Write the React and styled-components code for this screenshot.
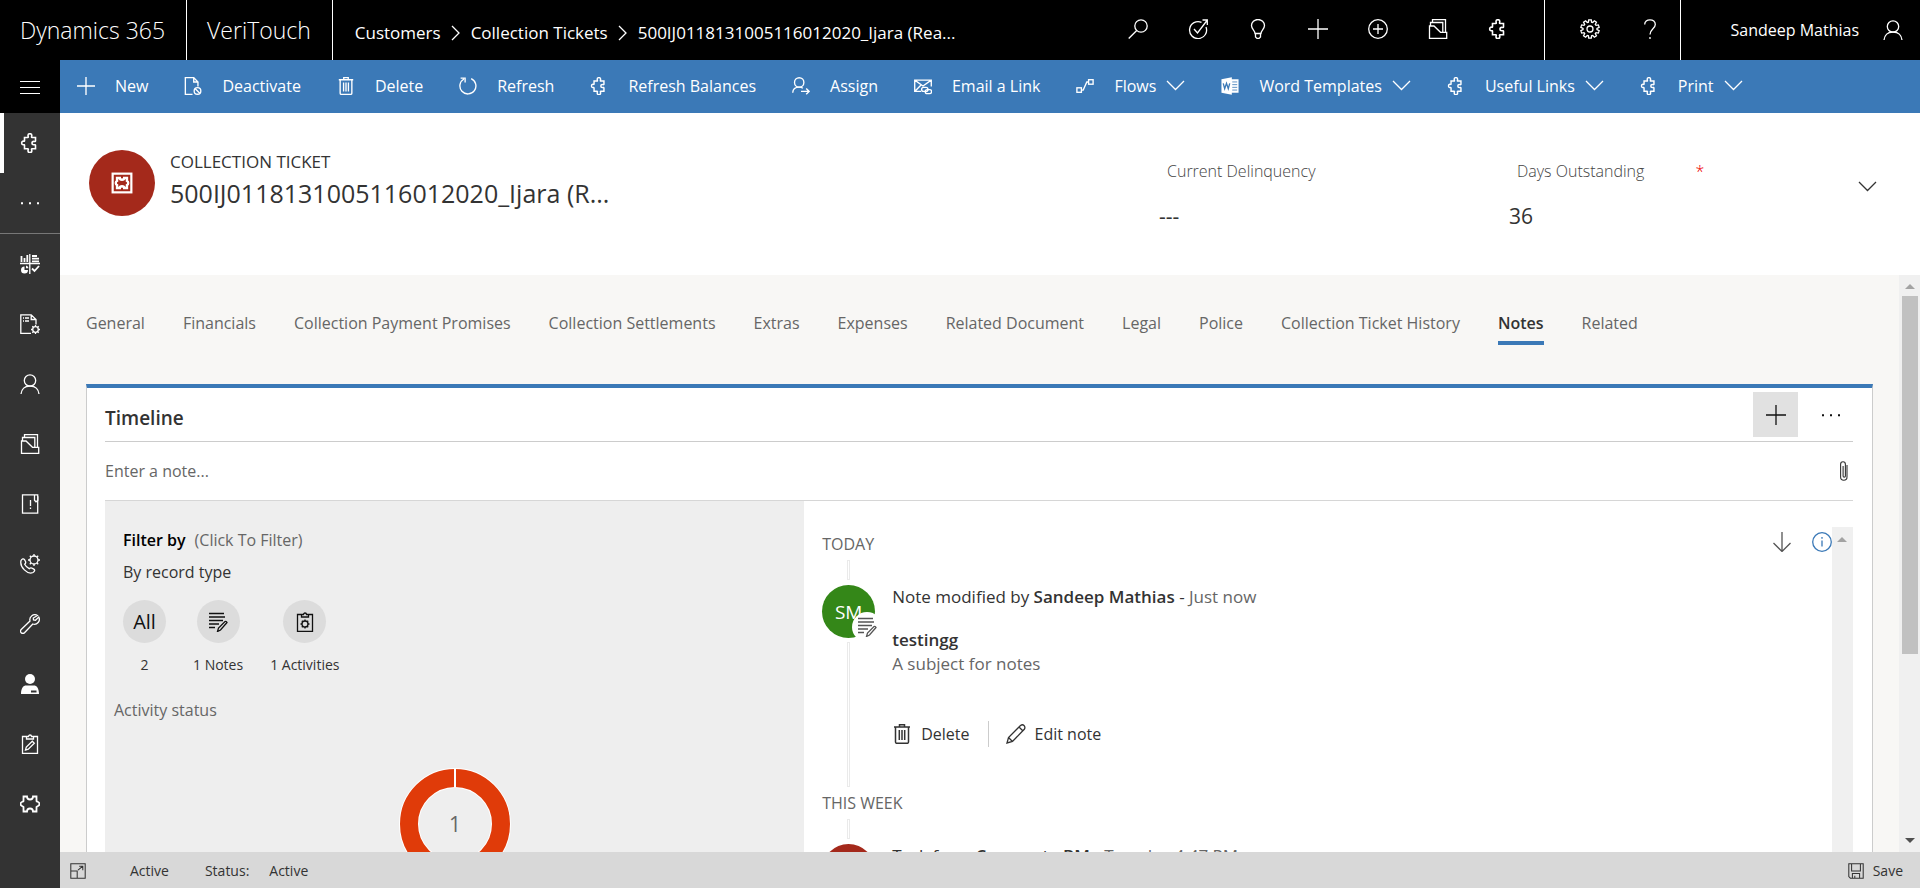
import React from 'react';
import styled, { createGlobalStyle } from 'styled-components';

const Global = createGlobalStyle`
  *, *::before, *::after { box-sizing: border-box; }
  body { margin: 0; font-family: "Open Sans", sans-serif; font-size: 16px; line-height: 24px; color: #333; background: #f8f7f5; }
  button, input { font: inherit; color: inherit; background: none; border: 0; padding: 0; }
  a { color: inherit; text-decoration: none; }
  ul { list-style: none; margin: 0; padding: 0; }
  h1, h2, h3, p { margin: 0; font-size: inherit; font-weight: inherit; }
`;

const Svg = styled.svg`
  display: block;
  flex: none;
  width: ${p => p.$w || 20}px;
  height: ${p => p.$h || 20}px;
  fill: none;
  stroke: currentColor;
  stroke-width: ${p => p.$s || 1.3};
`;
const PUZZLE = 'M6 4.500h1.800c1 0 .2-1 .2-1.900a1.900 1.900 0 0 1 3.800 0c0 .9-.8 1.900.2 1.900h3.500v3.500c0 .9-1 .4-1.800.4a1.700 1.700 0 0 0 0 3.400c.8 0 1.800-.5 1.800.5v3.500h-3.500c-1 0-.2 1-.2 1.900a1.900 1.900 0 0 1-3.800 0c0-.9.8-1.900-.2-1.900H4.500v-3.500c0-1-.5-.5-1.400-.5a1.900 1.900 0 0 1 0-3.700c.9 0 1.400.5 1.400-.4V4.500z';
const GEAR = (() => {
  const pts = [];
  for (let i = 0; i < 10; i++) {
    [[-13, 7], [-8, 9.300], [8, 9.300], [13, 7]].forEach(([d, r]) => {
      const a = ((i * 36 + d) * Math.PI) / 180;
      pts.push(`${(10 + r * Math.sin(a)).toFixed(2)} ${(10 - r * Math.cos(a)).toFixed(2)}`);
    });
  }
  return `M${pts.join('L')}z`;
})();
const GLYPHS = {
  menu: <path d="M0 4.500h20M0 10.500h20M0 16.500h20" strokeWidth="1" />,
  plus: <path d="M10 0v20M0 10h20" />,
  search: <><circle cx="13" cy="7" r="6.200" /><path d="M8.700 11.500L.7 19.500" /></>,
  target: <><path d="M18 8a8.500 8.500 0 1 1-4.500-4.700M6 10l3.500 4L19 1.500M14.500 1h4.800v5" /></>,
  bulb: <><path d="M7 14.500c0-3-3.500-4.500-3.500-8a6.500 6 0 0 1 13 0c0 3.500-3.500 5-3.500 8zM7.500 14.500v3.500l1.500 1.400h2l1.500-1.400v-3.500" /></>,
  circlePlus: <><circle cx="10" cy="10" r="9.300" /><path d="M10 5v10M5 10h10" /></>,
  folder: <path d="M4.500 3.500V.7h13v12.300M2.500 7V3.500h12.300v9.500M1.500 7h4.500l6.500 6.300h6.200v6H1.500z" />,
  puzzle: <path d={PUZZLE} strokeWidth="1.6" />,
  gear: <><path d={GEAR} /><circle cx="10" cy="10" r="3" /></>,
  help: <><path d="M4.700 5.500C4.700 2.500 7 .8 10 .8s5.300 1.700 5.300 4.700c0 4.200-5.300 4.500-5.300 10" /><path d="M10 18v2" /></>,
  person: <><circle cx="10" cy="6.500" r="5.700" /><path d="M1 20c.4-4.800 3.800-8 9-8s8.600 3.200 9 8" /></>,
  deactivate: <><path d="M9.500 19.300H1.500V.7h9.300l4.700 4.800v5M10.800.7v4.800h4.700" /><circle cx="15" cy="15.500" r="3.700" /><path d="M12.500 13l5 5" /></>,
  trash: <><path d="M2 3h16M7.500 3V.7h5V3M3.500 3v15q0 1.300 1.300 1.300h10.400q1.300 0 1.300-1.300V3" strokeWidth="1.500" /><path d="M7.300 6v10M10 6v10M12.700 6v10" strokeWidth="1.500" /></>,
  refresh: <path d="M13.500 1.800a8.900 8.900 0 1 1-8 .4M1.800 1.200h5v5" />,
  assign: <><circle cx="8" cy="6" r="5.200" /><path d="M.8 17.500C1 13.500 4 11.200 8 11.200c1.800 0 3 .4 4 1.300M10 16h9M15.800 12.800L19 16l-3.200 3.200" /></>,
  email: <><path d="M8 16H.8V3.500h18.400v7M.8 3.500l9.200 6.500 9.200-6.500M.8 16l7-7" /><rect x="8.500" y="11.500" width="7" height="4.500" rx="2.200" /><rect x="12.500" y="14" width="7" height="4.500" rx="2.200" /></>,
  flow: <><rect x="1" y="12" width="5" height="5" /><rect x="14" y="3" width="5" height="5" /><path d="M6 14.500h2L12 5.500h2" /></>,
  word: <><path d="M11 2.500h8.500v15H11z" fill="currentColor" stroke="none" /><path d="M12.500 5.500h5.500M12.500 8.500h5.500M12.500 11.500h5.500M12.500 14.500h5.500" stroke="#3b79b7" strokeWidth=".9" /><path d="M.5 2.500L12 .3v19.400L.5 17.500z" fill="currentColor" stroke="none" /><path d="M2.500 7l1.600 6 2-6 2 6 1.600-6" stroke="#3b79b7" /></>,
  dots: <path d="M1 9.200h2v2H1zM9 9.200h2v2H9zM17 9.200h2v2h-2z" fill="currentColor" stroke="none" />,
  dashboard: <><path d="M9.800 0v20M0 9.500h20" /><path d="M1.500 8V2M4.500 8V4M7.300 8V1M12 2h5M12 4.700h7M12 7.300h7M12 14.500l2.500 2.500 4.500-5" strokeWidth="1.8" /><path d="M4.500 12.500v3.500h3.500a3.500 3.500 0 1 1-3.500-3.500zM6 11.500a3 3 0 0 1 2.500 2.800H6z" fill="currentColor" stroke="none" /></>,
  docGear: <><path d="M11 19.300H.8V.8h10.400l4.800 4.700v5M11.200.8v4.700H16M3 4h1M5 4h4M3 7h1M5 7h4" /><circle cx="15.500" cy="15.500" r="2.800" /><path d="M15.500 11v1.500M15.500 18.500V20M11 15.500h1.500M18.500 15.500H20M12.300 12.300l1 1M17.700 17.700l1 1M12.300 18.700l1-1M17.700 13.300l1-1" /></>,
  report: <><path d="M2.500.8h15.200v18.400H2.500zM14.500.8v5.500l1.500 1.500 2-1.500v-4" /><path d="M10.500 6v6M10.500 13.500V15" /></>,
  phone: <><path d="M1 6.500c1-1.700 2.500-2.300 3.500-.8l1 1.800c.6 1.200 0 2-.8 2.700 1.300 2.500 2.500 3.500 4.500 4.500 1-1 1.800-1.200 2.800-.6l1.800 1c1.500 1 .8 2.400-.8 3.400C7.500 21 -.5 13 1 6.500z" /><circle cx="14" cy="6" r="4" /><path d="M14 0v2M14 10v2M8 6h2M18 6h2M9.800 1.800l1.400 1.400M16.800 8.800l1.400 1.400M9.800 10.200l1.400-1.400M16.800 3.200l1.400-1.400" /></>,
  wrench: <path d="M17.500 1.500A5 5 0 0 0 10 7L1.200 15.500a2 2 0 0 0 3.300 3.300L12.800 10a5 5 0 0 0 6-7L15.500 6.200l-2-.2-.2-2z" />,
  personSolid: <><circle cx="10" cy="5" r="5" fill="currentColor" stroke="none" /><path d="M1 20c0-6 2.500-8.500 5-8.500h8c2.500 0 5 2.500 5 8.500zM11 16.500v2h5.500v-2z" fill="currentColor" fillRule="evenodd" stroke="none" /></>,
  clipPencil: <><path d="M6.500 2.500h-4v16.800h15V2.500h-4M6.500 5V2.500h2a1.500 1.500 0 0 1 3 0h2V5z" /><path d="M5.500 16l.8-3 6-5.800 2 2-6 6z" /></>,
  clipGear: <><path d="M6.500 2.500h-4v16.800h15V2.500h-4M6.500 5V2.500h2a1.500 1.500 0 0 1 3 0h2V5z" /><circle cx="10" cy="12" r="3" /><path d="M10 7.500V9M10 15v1.500M5.500 12H7M13 12h1.500M6.800 8.800l1 1M12.200 14.200l1 1M6.800 15.200l1-1M12.200 9.800l1-1" /></>,
  puzzleWide: <path d="M3.500 2.500H7c0 2 .8 3 3 3s3-1 3-3h3.500V7c.5 1 3 .7 3 3s-2.500 2-3 3v4.500H13c0-2-.8-3-3-3s-3 1-3 3H3.500V13c-.5-1-3-.7-3-3s2.500-2 3-3z" strokeWidth="1.8" />,
  ticket: <><rect x="1.500" y="1.500" width="17" height="17" strokeWidth="2" /><path d="M5.500 5.500H8c0 2 4 2 4 0h2.500V8c1.500.5 1.500 3.500 0 4v2.500H12c0-2-4-2-4 0H5.500V12C4 11.500 4 8.500 5.500 8z" strokeWidth="2.200" /></>,
  notePencil: <><path d="M1 1.500h15M1 5h16M1 8.500h14M1 12h10M1 15.500h6" /><path d="M9.500 19.500l1-3.500 6.500-6.500q1.500-.5 2 1L12.500 18z" /></>,
  pencil: <><path d="M1 19l1.500-5.500L14.500 1.500q2-1.500 3.500 0t.5 3.500L6.500 17.500zM2.500 13.500l4 4M13 3l4 4" /></>,
  clip: <path d="M.6 4v12a3 3 0 0 0 6.400 0V4M.6 4v-.8a2.300 2.300 0 0 1 4.800 0V15a1 1 0 0 1-2.300 0V5" />,
  arrowDown: <path d="M10 0v19M1.500 11L10 19.500l8.500-8.500" />,
  info: <><circle cx="10" cy="10" r="9.300" /><path d="M10 8.500v6M10 5v1.800" /></>,
  popout: <><path d="M1 1h18v18H1zM1 10h8v9" /><path d="M10 9l6-5M11.500 4H16v5" /></>,
  save: <><path d="M1 1h18v18H3l-2-2zM4.500 1v9h11V1M5.500 19v-6h9v6M8.500 19v-3" /></>,
};
const Icon = ({ name, size = 20, stroke }) => (
  <Svg viewBox="0 0 20 20" $w={size} $h={size} $s={stroke} aria-hidden="true">{GLYPHS[name]}</Svg>
);
const Chevron = ({ right }) => (
  <Svg viewBox={right ? '0 0 10 18' : '0 0 19 11'} $w={right ? 10 : 19} $h={right ? 18 : 11} aria-hidden="true">
    <path d={right ? 'M1 2l7 7-7 7' : 'M1 1l8.500 8.500L18 1'} />
  </Svg>
);

const Page = styled.div`
  height: 100vh;
  display: grid;
  grid-template: 60px minmax(0, 1fr) / 60px minmax(0, 1fr);
`;
const TopBar = styled.header`
  grid-column: 1 / -1;
  display: flex;
  background: #000;
  color: #fff;
`;
const Brand = styled.a`
  display: flex;
  align-items: center;
  padding: 0 21px 0 20px;
  border-right: 1px solid #fff;
  font-size: 23px;
  font-weight: 300;
  white-space: nowrap;
`;
const Crumbs = styled.nav`
  flex: 1;
  display: flex;
  align-items: center;
  gap: 10px;
  padding: 6px 0 0 22px;
  font-size: 17px;
  white-space: nowrap;
`;
const TopGroup = styled.div`
  display: flex;
  padding: 0 ${p => p.$end || 0}px 0 ${p => p.$start || 0}px;
  border-right: 1px solid #fff;
`;
const TopButton = styled.button`
  width: 60px;
  padding-bottom: 2px;
  display: flex;
  align-items: center;
  justify-content: center;
`;
const User = styled.button`
  display: flex;
  align-items: center;
  gap: 24px;
  padding: 0 17px 0 49px;
`;
const Rail = styled.nav`
  background: #333;
  color: #fff;
  overflow: hidden;
`;
const RailButton = styled.button`
  width: 100%;
  height: ${p => (p.$menu ? 53 : p.$divided ? 61 : 60)}px;
  display: flex;
  align-items: center;
  justify-content: center;
  background: ${p => (p.$menu ? '#000' : 'transparent')};
  box-shadow: ${p => (p.$active ? 'inset 4px 0 #fff' : 'none')};
  border-bottom: ${p => (p.$divided ? '1px solid #777' : '0')};
`;
const Main = styled.main`
  display: flex;
  flex-direction: column;
  min-height: 0;
`;
const Commands = styled.div`
  flex: none;
  display: flex;
  gap: 35px;
  height: 53px;
  padding: 0 0 2px 16px;
  background: #3b79b7;
  color: #fff;
`;
const Command = styled.button`
  display: flex;
  align-items: center;
  gap: 19px;
  white-space: nowrap;
`;
const CommandIcon = styled.span`
  display: grid;
  place-items: center;
  width: 20px;
`;
const CommandLabel = styled.span`
  display: flex;
  align-items: center;
  gap: 10px;
`;
const RecordHeader = styled.section`
  flex: none;
  display: flex;
  height: 162px;
  padding: 37px 43px 0 29px;
  background: #fff;
`;
const Badge = styled.div`
  flex: none;
  width: 66px;
  height: 66px;
  display: grid;
  place-items: center;
  border-radius: 50%;
  background: #a4291b;
  color: #fff;
`;
const RecordName = styled.div`
  flex: 1;
  padding-left: 15px;
  p { font-size: 17px; }
  h1 { font-size: 25px; line-height: 38px; }
`;
const Field = styled.div`
  width: ${p => p.$w}px;
  padding-top: 9px;
`;
const FieldLabel = styled.div`
  display: flex;
  gap: 51px;
  padding-left: 8px;
  font-weight: 300;
  color: #444;
  span { color: #e00; }
`;
const FieldValue = styled.div`
  padding-top: 21px;
  font-size: 21px;
`;
const Expand = styled.button`
  align-self: flex-start;
  padding-top: 31px;
`;
const FormArea = styled.section`
  flex: 1;
  min-height: 0;
  display: flex;
  overflow: hidden;
`;
const Form = styled.div`
  flex: 1;
  min-width: 0;
  padding: 36px 26px 0;
`;
const Tabs = styled.nav`
  display: flex;
  gap: 38px;
  white-space: nowrap;
  color: #666;
`;
const Tab = styled.a`
  height: 34px;
  border-bottom: 4px solid ${p => (p.$active ? '#3b79b7' : 'transparent')};
  ${p => p.$active && 'font-weight: 600; color: #333;'}
`;
const Card = styled.section`
  margin-top: 39px;
  padding: 0 19px 0 18px;
  background: #fff;
  border: 1px solid #ccc;
  border-top: 4px solid #3b79b7;
`;
const CardHead = styled.div`
  display: flex;
  align-items: center;
  height: 54px;
  border-bottom: 1px solid #ccc;
  h2 { flex: 1; padding-top: 6px; font-size: 19px; font-weight: 600; }
`;
const CardButton = styled.button`
  width: 45px;
  height: 45px;
  display: grid;
  place-items: center;
  background: ${p => (p.$filled ? '#e1e1e1' : 'transparent')};
  margin-right: ${p => (p.$filled ? 10 : 0)}px;
  color: #111;
`;
const NoteEntry = styled.label`
  display: flex;
  align-items: center;
  height: 59px;
  padding: 0 5px 1px 0;
  border-bottom: 1px solid #d6d6d6;
  input { flex: 1; outline: 0; }
  input::placeholder { color: #666; opacity: 1; }
`;
const Split = styled.div`
  display: grid;
  grid-template-columns: 2fr 3fr;
`;
const Filters = styled.div`
  padding: 27px 9px 40px;
  background: #eee;
`;
const FilterTop = styled.div`
  padding-left: 9px;
`;
const FilterTitle = styled.h3`
  display: flex;
  gap: 9px;
  margin-bottom: 8px;
  color: #666;
  strong { font-weight: 600; color: #000; }
`;
const Kinds = styled.ul`
  display: flex;
  gap: 27px;
  padding-top: 16px;
`;
const Kind = styled.button`
  display: flex;
  flex-direction: column;
  align-items: center;
  gap: 10px;
  font-size: 14px;
`;
const Disc = styled.span`
  width: 43px;
  height: 43px;
  display: grid;
  place-items: center;
  border-radius: 50%;
  background: #dcdcdc;
  color: #111;
  font-size: 20px;
`;
const ChartTitle = styled.h3`
  margin: 21px 0 46px;
  color: #666;
`;
const Donut = styled.svg`
  display: block;
  width: 112px;
  margin: 0 auto;
  text { font-size: 21px; font-weight: 500; fill: #666; text-anchor: middle; }
`;
const Feed = styled.div`
  display: flex;
  padding-top: 26px;
`;
const FeedBody = styled.div`
  flex: 1;
  padding: 4px 0 0 18px;
`;
const DayRow = styled.div`
  display: flex;
  align-items: center;
  height: 26px;
  color: #666;
  h3 { flex: 1; }
`;
const SortButton = styled.button`
  margin-left: 20px;
  padding-bottom: 4px;
  color: ${p => (p.$blue ? '#3b79b7' : '#555')};
`;
const Stem = styled.div`
  width: 3px;
  flex: ${p => (p.$grow ? '1' : 'none')};
  height: 20px;
  margin: ${p => (p.$grow ? '4px auto 0' : '3px 0 5px 25px')};
  border: 1px solid #eaeaea;
`;
const Entry = styled.article`
  display: flex;
  gap: 17px;
  margin-bottom: 3px;
  height: 202px;
`;
const EntrySide = styled.div`
  width: 53px;
  display: flex;
  flex-direction: column;
`;
const Avatar = styled.div`
  position: relative;
  width: 53px;
  height: 53px;
  display: grid;
  place-items: center;
  border-radius: 50%;
  background: ${p => p.$color};
  color: #fff;
  font-size: 19px;
`;
const AvatarMark = styled.span`
  position: absolute;
  right: -7px;
  bottom: -4px;
  width: 30px;
  height: 30px;
  display: grid;
  place-items: center;
  border-radius: 50%;
  background: #fff;
  color: #555;
`;
const EntryText = styled.div`
  font-size: 17px;
  b { font-weight: 600; }
  time { color: #666; }
`;
const EntryTitle = styled.p`
  margin-top: 19px;
  font-weight: 600;
`;
const EntryNote = styled.p`
  color: #666;
`;
const Actions = styled.div`
  display: flex;
  margin-top: 45px;
  font-size: 16px;
`;
const Action = styled.button`
  display: flex;
  align-items: center;
  gap: 9px;
  height: 26px;
  &:first-child { padding-right: 18px; margin-right: 17px; border-right: 1px solid #ccc; }
`;
const FeedTrack = styled.div`
  width: 21px;
  padding: 9px 5px;
  background: #f0f0f0;
`;
const PageTrack = styled.div`
  width: 21px;
  display: flex;
  flex-direction: column;
  align-items: center;
  justify-content: space-between;
  padding: 8px 0;
  background: #f0f0f0;
`;
const Thumb = styled.div`
  width: 16px;
  flex: 1;
  margin: 7px 0 184px;
  background: #c1c1c1;
`;
const Triangle = ({ up }) => (
  <Svg viewBox="0 0 10 6" $w={10} $h={6} aria-hidden="true">
    <path d={up ? 'M0 6l5-5 5 5z' : 'M0 0l5 5 5-5z'} fill={up ? '#a3a3a3' : '#505050'} stroke="none" />
  </Svg>
);
const Status = styled.footer`
  flex: none;
  display: flex;
  align-items: center;
  gap: 20px;
  height: 36px;
  padding: 2px 17px 0 10px;
  background: #d8d8d8;
  font-size: 14px;
`;
const StatusCell = styled.span`
  margin-left: ${p => p.$start || 0}px;
`;
const SaveButton = styled.button`
  display: flex;
  align-items: center;
  gap: 9px;
  margin-left: auto;
`;

const commands = [
  ['plus', 'New'], ['deactivate', 'Deactivate'], ['trash', 'Delete'], ['refresh', 'Refresh'],
  ['puzzle', 'Refresh Balances'], ['assign', 'Assign'], ['email', 'Email a Link'], ['flow', 'Flows', true],
  ['word', 'Word Templates', true], ['puzzle', 'Useful Links', true], ['puzzle', 'Print', true],
];
const tabs = ['General', 'Financials', 'Collection Payment Promises', 'Collection Settlements', 'Extras', 'Expenses',
  'Related Document', 'Legal', 'Police', 'Collection Ticket History', 'Notes', 'Related'];
const rail = [['dashboard', 'Dashboards'], ['docGear', 'Document setup'], ['person', 'Customers'], ['folder', 'Cases'],
  ['report', 'Reports'], ['phone', 'Calls'], ['wrench', 'Service'], ['personSolid', 'Agents'],
  ['clipPencil', 'Surveys'], ['puzzleWide', 'Extensions']];
const tools = [['search', 'Search'], ['target', 'Tasks'], ['bulb', 'Insights'], ['plus', 'Quick create'],
  ['circlePlus', 'Add'], ['folder', 'Cases'], ['puzzle', 'Extensions']];

export default function App() {
  return (
    <Page>
      <Global />
      <TopBar>
        <Brand href="#">Dynamics 365</Brand>
        <Brand href="#">VeriTouch</Brand>
        <Crumbs>
          <a href="#">Customers</a><Chevron right />
          <a href="#">Collection Tickets</a><Chevron right />
          <a href="#">500IJ0118131005116012020_Ijara (Rea...</a>
        </Crumbs>
        <TopGroup $end={16}>
          {tools.map(([n, l]) => <TopButton key={n} aria-label={l}><Icon name={n} /></TopButton>)}
        </TopGroup>
        <TopGroup $start={15}>
          <TopButton aria-label="Settings"><Icon name="gear" /></TopButton>
          <TopButton aria-label="Help"><Icon name="help" /></TopButton>
        </TopGroup>
        <User>Sandeep Mathias<Icon name="person" /></User>
      </TopBar>
      <Rail>
        <RailButton $menu aria-label="Menu"><Icon name="menu" /></RailButton>
        <RailButton $active aria-label="Collection tickets"><Icon name="puzzle" /></RailButton>
        <RailButton $divided aria-label="More"><Icon name="dots" /></RailButton>
        {rail.map(([n, l]) => <RailButton key={n} aria-label={l}><Icon name={n} /></RailButton>)}
      </Rail>
      <Main>
        <Commands>
          {commands.map(([n, l, more]) => (
            <Command key={l}>
              <CommandIcon><Icon name={n} size={18} stroke={1.5} /></CommandIcon>
              <CommandLabel>{l}{more && <Chevron />}</CommandLabel>
            </Command>
          ))}
        </Commands>
        <RecordHeader>
          <Badge><Icon name="ticket" size={22} /></Badge>
          <RecordName>
            <p>COLLECTION TICKET</p>
            <h1>500IJ0118131005116012020_Ijara (R...</h1>
          </RecordName>
          <Field $w={350}><FieldLabel>Current Delinquency</FieldLabel><FieldValue>---</FieldValue></Field>
          <Field $w={349}><FieldLabel>Days Outstanding<span>*</span></FieldLabel><FieldValue>36</FieldValue></Field>
          <Expand aria-label="Expand header"><Chevron /></Expand>
        </RecordHeader>
        <FormArea>
          <Form>
            <Tabs>{tabs.map(t => <Tab key={t} href="#" $active={t === 'Notes'}>{t}</Tab>)}</Tabs>
            <Card>
              <CardHead>
                <h2>Timeline</h2>
                <CardButton $filled aria-label="Add record"><Icon name="plus" /></CardButton>
                <CardButton aria-label="More commands"><Icon name="dots" /></CardButton>
              </CardHead>
              <NoteEntry>
                <input placeholder="Enter a note..." aria-label="Enter a note" />
                <Svg viewBox="0 0 8 20" $w={8} $h={20} $s={1.1} aria-hidden="true">{GLYPHS.clip}</Svg>
              </NoteEntry>
              <Split>
                <Filters>
                  <FilterTop>
                    <FilterTitle><strong>Filter by</strong>(Click To Filter)</FilterTitle>
                    <p>By record type</p>
                    <Kinds>
                      <li><Kind><Disc>All</Disc>2</Kind></li>
                      <li><Kind><Disc><Icon name="notePencil" /></Disc>1 Notes</Kind></li>
                      <li><Kind><Disc><Icon name="clipGear" /></Disc>1 Activities</Kind></li>
                    </Kinds>
                  </FilterTop>
                  <ChartTitle>Activity status</ChartTitle>
                  <Donut viewBox="0 0 112 112">
                    <circle cx="56" cy="56" r="46" fill="none" stroke="#fff" strokeWidth="20" />
                    <circle cx="56" cy="56" r="46" fill="none" stroke="#e03b09" strokeWidth="18" />
                    <path d="M56 0v19" stroke="#fff" strokeWidth="2" />
                    <text x="56" y="64">1</text>
                  </Donut>
                </Filters>
                <Feed>
                  <FeedBody>
                    <DayRow>
                      <h3>TODAY</h3>
                      <SortButton aria-label="Sort"><Icon name="arrowDown" /></SortButton>
                      <SortButton $blue aria-label="Information"><Icon name="info" /></SortButton>
                    </DayRow>
                    <Stem />
                    <Entry>
                      <EntrySide>
                        <Avatar $color="#348718">SM<AvatarMark><Icon name="notePencil" /></AvatarMark></Avatar>
                        <Stem $grow />
                      </EntrySide>
                      <EntryText>
                        <p>Note modified by <b>Sandeep Mathias</b> - <time>Just now</time></p>
                        <EntryTitle>testingg</EntryTitle>
                        <EntryNote>A subject for notes</EntryNote>
                        <Actions>
                          <Action><Icon name="trash" />Delete</Action>
                          <Action><Icon name="pencil" />Edit note</Action>
                        </Actions>
                      </EntryText>
                    </Entry>
                    <DayRow><h3>THIS WEEK</h3></DayRow>
                    <Stem />
                    <Entry>
                      <EntrySide><Avatar $color="#a4291b" /></EntrySide>
                      <EntryText><p>Task from <b>Corporate BM</b> - <time>Tuesday 4:47 PM</time></p></EntryText>
                    </Entry>
                  </FeedBody>
                  <FeedTrack><Triangle up /></FeedTrack>
                </Feed>
              </Split>
            </Card>
          </Form>
          <PageTrack><Triangle up /><Thumb /><Triangle /></PageTrack>
        </FormArea>
        <Status>
          <Icon name="popout" size={16} />
          <StatusCell $start={24}>Active</StatusCell>
          <StatusCell $start={16}>Status:</StatusCell>
          <StatusCell>Active</StatusCell>
          <SaveButton><Icon name="save" size={16} />Save</SaveButton>
        </Status>
      </Main>
    </Page>
  );
}
